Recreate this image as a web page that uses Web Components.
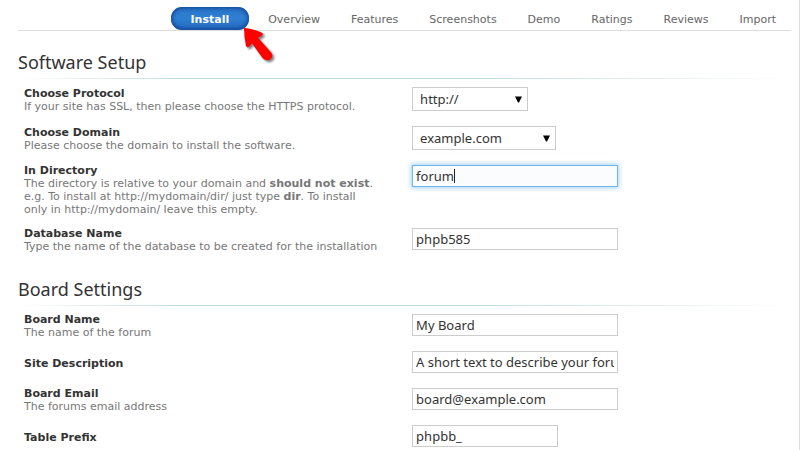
<!DOCTYPE html>
<html lang="en">
<head>
<meta charset="utf-8">
<title>Install</title>
<style>
  body {
    background-color: white;
    color: #333;
    font-family: "DejaVu Sans", Verdana, sans-serif;
    font-size: 11px;
    line-height: 13px;
    margin: 0;
    overflow: hidden;
  }
</style>
</head>
<body>
<install-page>
  <tab-bar slot="tabs">
    <tab-link active>Install</tab-link>
    <tab-link>Overview</tab-link>
    <tab-link>Features</tab-link>
    <tab-link>Screenshots</tab-link>
    <tab-link>Demo</tab-link>
    <tab-link>Ratings</tab-link>
    <tab-link>Reviews</tab-link>
    <tab-link>Import</tab-link>
  </tab-bar>

  <form-section heading="Software Setup">
    <select-field label="Choose Protocol" options="http://,http://www.,https://,https://www." size="small">If your site has SSL, then please choose the HTTPS protocol.</select-field>
    <select-field label="Choose Domain" options="example.com">Please choose the domain to install the software.</select-field>
    <text-field label="In Directory" value="forum" focused>The directory is relative to your domain and <b>should not exist</b>.<br>e.g. To install at http://mydomain/dir/ just type <b>dir</b>. To install<br>only in http://mydomain/ leave this empty.</text-field>
    <text-field label="Database Name" value="phpb585">Type the name of the database to be created for the installation</text-field>
  </form-section>

  <form-section heading="Board Settings">
    <text-field label="Board Name" value="My Board">The name of the forum</text-field>
    <text-field label="Site Description" value="A short text to describe your forum"></text-field>
    <text-field label="Board Email" value="board@example.com">The forums email address</text-field>
    <text-field label="Table Prefix" value="phpbb_" size="small"></text-field>
  </form-section>
</install-page>

<script>
class InstallPage extends HTMLElement {
  constructor() {
    super();
    this.attachShadow({mode: 'open'});
    this.shadowRoot.innerHTML = `
    <style>
      :host {
        border-right: 1px solid #ddd;
        box-sizing: border-box;
        display: block;
        min-height: 100vh;
        padding: 7px 8px 0 18px;
      }
    </style>
    <slot name="tabs"></slot>
    <main><slot></slot></main>`;
  }
}
customElements.define('install-page', InstallPage);

class TabBar extends HTMLElement {
  constructor() {
    super();
    this.attachShadow({mode: 'open'});
    this.shadowRoot.innerHTML = `
    <style>
      :host {
        border-bottom: 1px solid #ddd;
        display: block;
      }

      nav {
        display: flex;
        gap: 1px;
        justify-content: flex-end;
      }
    </style>
    <nav><slot></slot></nav>`;
  }
}
customElements.define('tab-bar', TabBar);

class TabLink extends HTMLElement {
  constructor() {
    super();
    this.attachShadow({mode: 'open'});
    //only the active tab gets the pointer drawn on its corner
    const pointer = `
    <svg width="40" height="42" viewBox="246 75 120 126" aria-hidden="true">
      <path d="M252 83 Q280 86 306 98 Q312 103 304 108 L294 113 L334 158 Q341 170 332 177 Q320 185 308 175 L276 130 L269 139 Q262 146 258 138 Q252 112 252 83 Z" fill="#f00"/>
    </svg>`;
    this.shadowRoot.innerHTML = `
    <style>
      :host {
        display: block;
        position: relative;
      }

      a {
        color: #666;
        display: block;
        line-height: 21px;
        padding: 2px 15px 0;
        text-decoration: none;
      }

      :host([active]) {
        margin-right: 3px;
      }

      :host([active]) a {
        background: linear-gradient(#2a76c8, #2e7fd2 50%, #2468bd);
        border-radius: 11px;
        box-shadow: inset 0 0 4px 1px #0d3f94;
        color: white;
        font-weight: bold;
        padding: 2px 20px 0;
      }

      svg {
        filter: drop-shadow(2px 2px 1px rgb(0,0,0,0.5));
        left: calc(100% - 7px);
        pointer-events: none;
        position: absolute;
        top: 18px;
        z-index: 1;
      }
    </style>
    <a href="#"><slot></slot></a>${this.hasAttribute('active') ? pointer : ''}`;
  }
}
customElements.define('tab-link', TabLink);

class FormSection extends HTMLElement {
  constructor() {
    super();
    this.attachShadow({mode: 'open'});
    this.shadowRoot.innerHTML = `
    <style>
      :host {
        display: block;
        padding: 16px 0 5px;
      }

      h2 {
        font-family: "Noto Sans", sans-serif;
        font-size: 18px;
        font-weight: normal;
        line-height: 30px;
        margin: 0;
      }

      .rule {
        background: linear-gradient(to right, transparent, #c3dbe6 20%, #c3dbe6 60%, transparent);
        height: 1px;
        margin-top: 1px;
      }

      .rows {
        display: grid;
        gap: 11px;
        padding: 7px 6px 0;
      }
    </style>
    <h2></h2>
    <div class="rule"></div>
    <div class="rows"><slot></slot></div>`;
    this.shadowRoot.querySelector('h2').textContent = this.getAttribute('heading');
  }
}
customElements.define('form-section', FormSection);

// shared two column row, the subclasses fill in the control
class FormField extends HTMLElement {
  constructor() {
    super();
    this.attachShadow({mode: 'open'});
    this.shadowRoot.innerHTML = `
    <style>
      :host {
        display: grid;
        grid-template-columns: 51% 1fr;
      }

      .caption {
        align-content: center;
        box-sizing: border-box;
        display: grid;
        min-height: 26px;
        padding-right: 16px;
      }

      .field {
        align-self: start;
        padding: 1px 0 3px;
      }

      label {
        font-weight: bold;
      }

      .hint {
        color: #777;
      }

      input, select {
        appearance: none;
        background-color: white;
        border: 1px solid #ccc;
        border-radius: 0;
        box-sizing: border-box;
        color: #333;
        display: block;
        font-family: "Noto Sans", sans-serif;
        font-size: 13px;
        margin: 0;
        outline: none;
      }

      input {
        height: 22px;
        max-width: 100%;
        padding: 0 3px;
        width: 206px;
      }

      :host([size=small]) input {
        width: 146px;
      }

      input:focus {
        background-color: #fafcfe;
        border-color: #6fb5ec;
        box-shadow: 0 0 5px 1px #a5d2f5;
      }

      /* steady caret until the user starts to type */
      :host([focused]) input:focus {
        background-image: linear-gradient(#222, #222);
        background-position: 41px 3px;
        background-repeat: no-repeat;
        background-size: 1px 14px;
        caret-color: transparent;
      }

      .select {
        align-items: center;
        display: grid;
        width: 144px;
      }

      :host([size=small]) .select {
        width: 116px;
      }

      select {
        grid-area: 1 / 1;
        height: 24px;
        padding: 0 20px 0 7px;
        width: 100%;
      }

      .select svg {
        grid-area: 1 / 1;
        justify-self: end;
        margin-right: 6px;
        pointer-events: none;
      }
    </style>
    <div class="caption">
      <label for="control"></label>
      <div class="hint"><slot></slot></div>
    </div>
    <div class="field"></div>`;
    this.shadowRoot.querySelector('label').textContent = this.getAttribute('label');
    this.field = this.shadowRoot.querySelector('.field');
  }
}

class TextField extends FormField {
  constructor() {
    super();
    const input = document.createElement('input');
    input.setAttribute('type', 'text');
    input.setAttribute('id', 'control');
    input.setAttribute('value', this.getAttribute('value'));
    input.addEventListener('input', () => this.removeAttribute('focused'));
    this.field.appendChild(input);
  }

  connectedCallback() {
    if(this.hasAttribute('focused')) {
      const input = this.shadowRoot.querySelector('input');
      input.focus();
      input.setSelectionRange(input.value.length, input.value.length);
    }
  }
}
customElements.define('text-field', TextField);

class SelectField extends FormField {
  constructor() {
    super();
    this.field.innerHTML = `
    <div class="select">
      <select id="control"></select>
      <svg width="7" height="7" viewBox="0 0 7 7" aria-hidden="true"><path d="M0 0.5 H7 L4 6.5 H3 Z" fill="#000"/></svg>
    </div>`;
    const select = this.field.querySelector('select');
    for(const text of this.getAttribute('options').split(',')) {
      const option = document.createElement('option');
      option.textContent = text;
      select.appendChild(option);
    }
  }
}
customElements.define('select-field', SelectField);
</script>
</body>
</html>
